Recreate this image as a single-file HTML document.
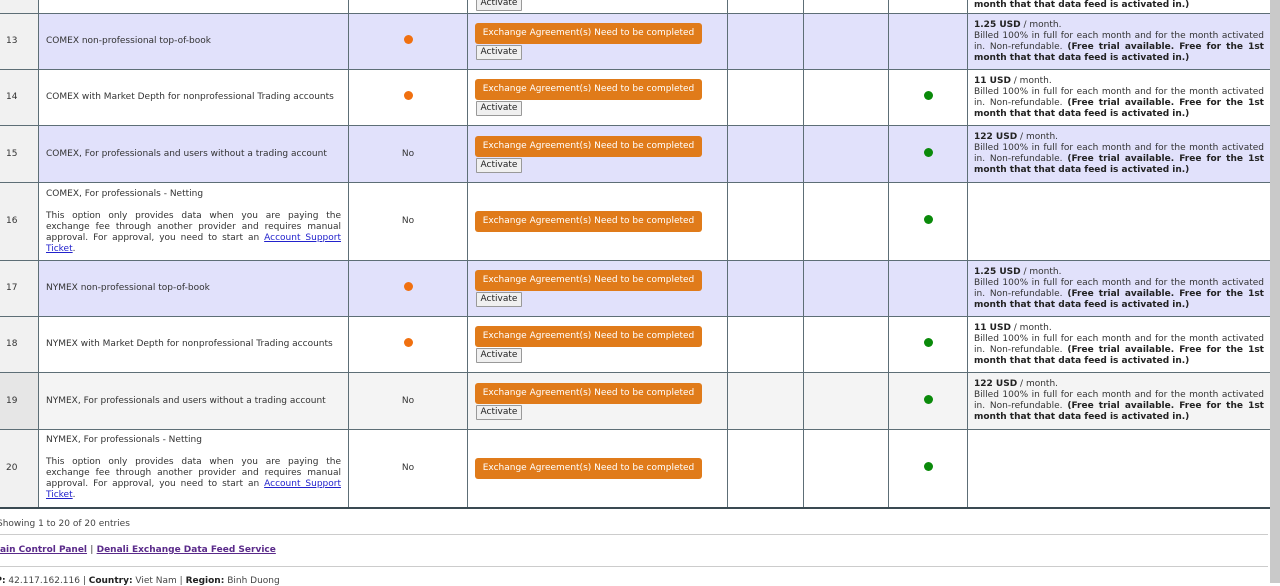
<!DOCTYPE html>
<html><head><meta charset="utf-8"><style>
body{margin:0;width:1280px;height:583px;overflow:hidden;background:#fff;font-family:"DejaVu Sans","Liberation Sans",sans-serif;font-size:9px;color:#333;position:relative}
table{position:absolute;left:-1px;top:-44px;border-collapse:collapse;table-layout:fixed;width:1272px}
td{border:1px solid #5d6e76;padding:0;vertical-align:middle;line-height:11px}
tr.l td{background:#e1e1fb}
tr.g td{background:#f4f4f4}
td.n{background:#f1f1f1 !important;padding-left:6px}
tr.g td.n{background:#e6e6e6 !important}
td.d{padding:0 7px 0 7px}
td.d p{margin:0;text-align:justify}
td.c{text-align:center}
td.p{padding:0 7px 0 6px;text-align:justify}
.ob{display:block;width:227px;height:21px;line-height:21px;background:#e07b1a;color:#fff;border-radius:3px;text-align:center;margin-left:7px;font-size:9px}
.ab{display:block;width:44px;height:13px;line-height:13px;border:1px solid #999;background:#f0f0f0;color:#222;text-align:center;margin:1px 0 0 8px;border-radius:1px}
.od{display:inline-block;width:9px;height:9px;border-radius:50%;background:#f07010}
.gd{display:inline-block;width:9px;height:9px;border-radius:50%;background:#0a8a0a}
a{color:#22c;text-decoration:underline}
b{color:#222}
tr.last td{border-bottom:2px solid #3a4a52}
.foot{position:absolute;font-size:9px}
.hr{position:absolute;left:0;width:1268px;height:1px;background:#ccc}
.sb{position:absolute;right:0;top:0;width:10px;height:583px;background:#c9c9c9}
</style></head><body>
<table>
<colgroup><col style="width:39px"><col style="width:310px"><col style="width:119px"><col style="width:260px"><col style="width:76px"><col style="width:85px"><col style="width:79px"><col style="width:304px"></colgroup>
<tr style="height:57px"><td class="n"></td><td class="d"></td><td></td><td style="vertical-align:bottom"><span class="ab" style="margin-bottom:2px">Activate</span></td><td></td><td></td><td></td><td class="p" style="vertical-align:bottom;padding-bottom:2px"><b>month that that data feed is activated in.)</b></td></tr>
<tr class="l" style="height:56px"><td class="n">13</td><td class="d">COMEX non-professional top-of-book</td><td class="c"><span class="od"></span></td><td><span class="ob">Exchange Agreement(s) Need to be completed</span><span class="ab">Activate</span></td><td></td><td></td><td></td><td class="p"><b>1.25 USD</b> / month.<br>Billed 100% in full for each month and for the month activated in. Non-refundable. <b>(Free trial available. Free for the 1st month that that data feed is activated in.)</b></td></tr>
<tr style="height:56px"><td class="n">14</td><td class="d">COMEX with Market Depth for nonprofessional Trading accounts</td><td class="c"><span class="od"></span></td><td><span class="ob">Exchange Agreement(s) Need to be completed</span><span class="ab">Activate</span></td><td></td><td></td><td class="c"><span class="gd"></span></td><td class="p"><b>11 USD</b> / month.<br>Billed 100% in full for each month and for the month activated in. Non-refundable. <b>(Free trial available. Free for the 1st month that that data feed is activated in.)</b></td></tr>
<tr class="l" style="height:57px"><td class="n">15</td><td class="d">COMEX, For professionals and users without a trading account</td><td class="c">No</td><td><span class="ob">Exchange Agreement(s) Need to be completed</span><span class="ab">Activate</span></td><td></td><td></td><td class="c"><span class="gd"></span></td><td class="p"><b>122 USD</b> / month.<br>Billed 100% in full for each month and for the month activated in. Non-refundable. <b>(Free trial available. Free for the 1st month that that data feed is activated in.)</b></td></tr>
<tr style="height:78px"><td class="n">16</td><td class="d"><p>COMEX, For professionals - Netting</p><p style="margin-top:11px">This option only provides data when you are paying the exchange fee through another provider and requires manual approval. For approval, you need to start an <a>Account Support Ticket</a>.</p></td><td class="c">No</td><td><span class="ob">Exchange Agreement(s) Need to be completed</span></td><td></td><td></td><td class="c"><span class="gd"></span></td><td></td></tr>
<tr class="l" style="height:56px"><td class="n">17</td><td class="d">NYMEX non-professional top-of-book</td><td class="c"><span class="od"></span></td><td><span class="ob">Exchange Agreement(s) Need to be completed</span><span class="ab">Activate</span></td><td></td><td></td><td></td><td class="p"><b>1.25 USD</b> / month.<br>Billed 100% in full for each month and for the month activated in. Non-refundable. <b>(Free trial available. Free for the 1st month that that data feed is activated in.)</b></td></tr>
<tr style="height:56px"><td class="n">18</td><td class="d">NYMEX with Market Depth for nonprofessional Trading accounts</td><td class="c"><span class="od"></span></td><td><span class="ob">Exchange Agreement(s) Need to be completed</span><span class="ab">Activate</span></td><td></td><td></td><td class="c"><span class="gd"></span></td><td class="p"><b>11 USD</b> / month.<br>Billed 100% in full for each month and for the month activated in. Non-refundable. <b>(Free trial available. Free for the 1st month that that data feed is activated in.)</b></td></tr>
<tr class="g" style="height:57px"><td class="n">19</td><td class="d">NYMEX, For professionals and users without a trading account</td><td class="c">No</td><td><span class="ob">Exchange Agreement(s) Need to be completed</span><span class="ab">Activate</span></td><td></td><td></td><td class="c"><span class="gd"></span></td><td class="p"><b>122 USD</b> / month.<br>Billed 100% in full for each month and for the month activated in. Non-refundable. <b>(Free trial available. Free for the 1st month that that data feed is activated in.)</b></td></tr>
<tr class="last" style="height:78px"><td class="n">20</td><td class="d"><p>NYMEX, For professionals - Netting</p><p style="margin-top:11px">This option only provides data when you are paying the exchange fee through another provider and requires manual approval. For approval, you need to start an <a>Account Support Ticket</a>.</p></td><td class="c">No</td><td><span class="ob">Exchange Agreement(s) Need to be completed</span></td><td></td><td></td><td class="c"><span class="gd"></span></td><td></td></tr>
</table>
<div class="foot" style="top:519px;left:-3px;color:#444">Showing 1 to 20 of 20 entries</div>
<div class="hr" style="top:534px"></div>
<div class="foot" style="top:545px;left:-9px;font-weight:bold;color:#666"><a style="color:#5a2a8a">Main Control Panel</a> | <a style="color:#5a2a8a">Denali Exchange Data Feed Service</a></div>
<div class="hr" style="top:566px"></div>
<div class="foot" style="top:576px;left:-8px;color:#444"><b>IP:</b> 42.117.162.116 | <b>Country:</b> Viet Nam | <b>Region:</b> Binh Duong</div>
<div class="sb"></div>
</body></html>
